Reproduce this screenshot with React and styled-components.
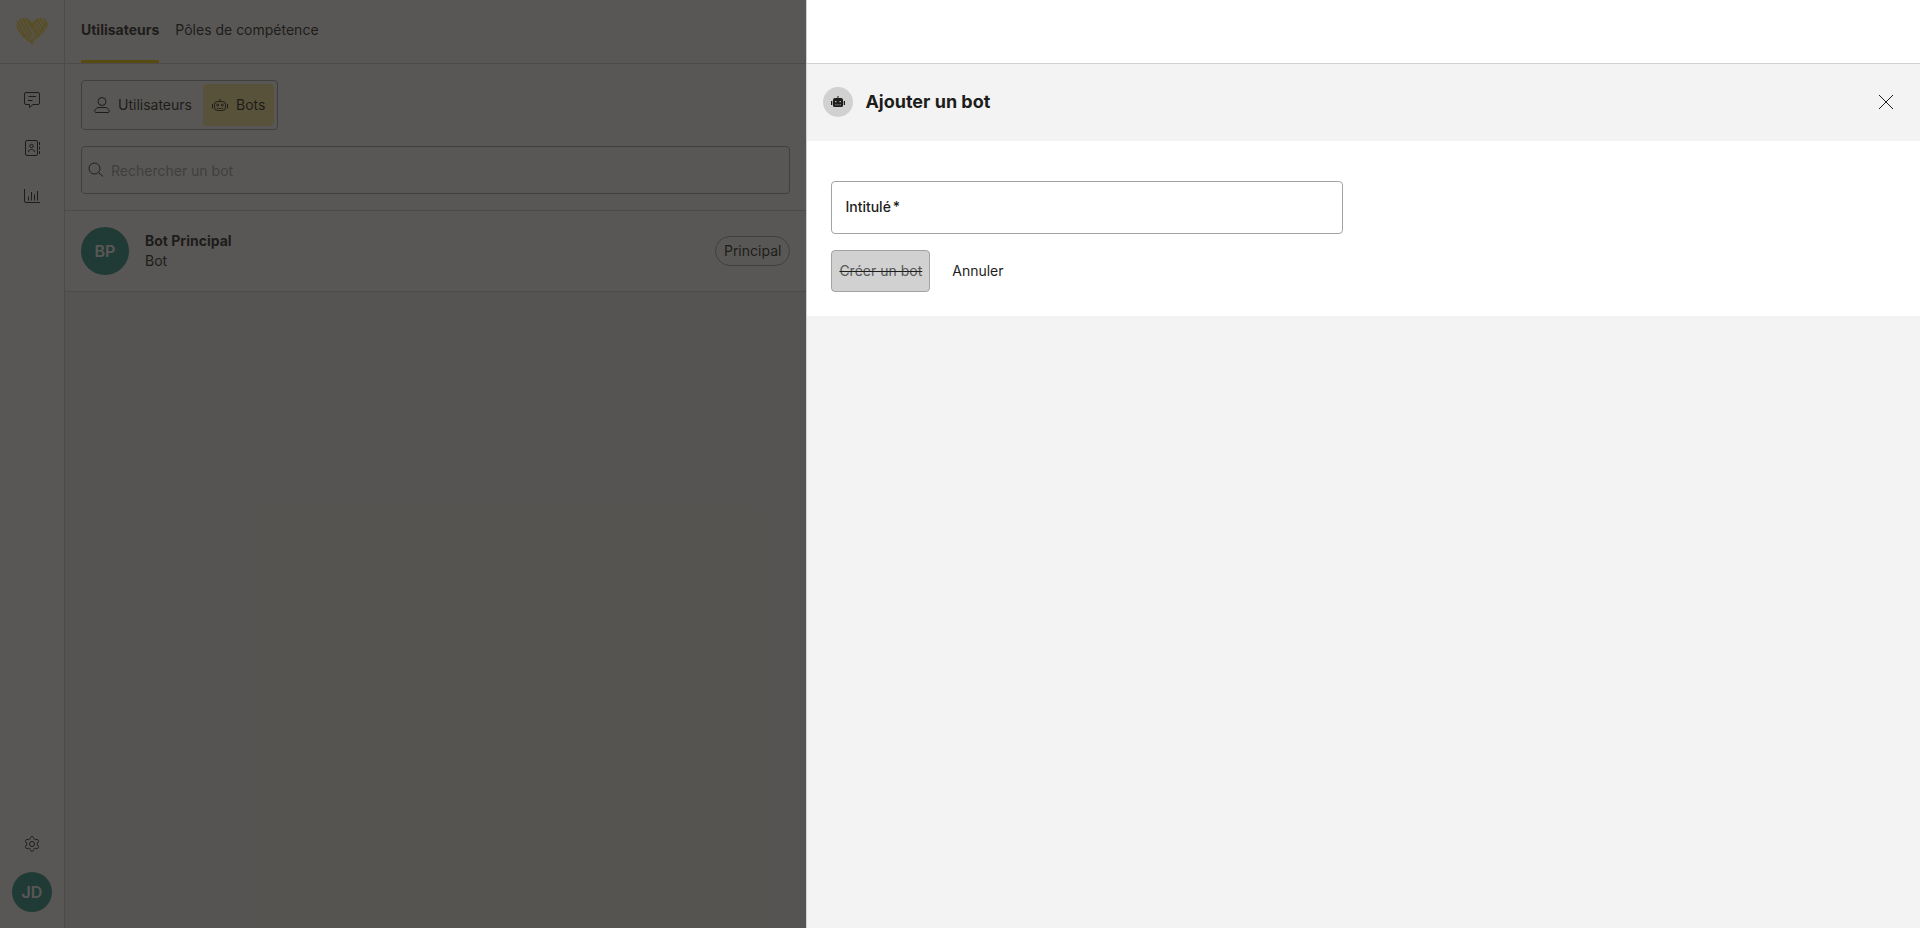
import React, { useState } from "react";
import styled, { createGlobalStyle } from "styled-components";

const GlobalStyle = createGlobalStyle`
  * {
    box-sizing: border-box;
  }
  body {
    margin: 0;
    font-family: Inter, "Liberation Sans", sans-serif;
    font-size: 14px;
    line-height: 20px;
    color: #1d1d1b;
    background: #f3f3f3;
  }
  button, input {
    font: inherit;
    color: inherit;
  }
  h1, h2, p {
    margin: 0;
  }
`;

const HeartLogo = () => (
  <svg width="32" height="28" viewBox="0 0 32 28" aria-hidden="true">
    <defs>
      <clipPath id="heart">
        <path d="M16 5C13 0 4-1 1 4c-3 6 2 11 6 16l9 8 10-10c4-4 8-9 5-14-3-5-12-4-15 1z" />
      </clipPath>
    </defs>
    <g clipPath="url(#heart)">
      <path d="M16 5C13 0 4-1 1 4c-3 6 2 11 6 16l9 8 10-10c4-4 8-9 5-14-3-5-12-4-15 1z" fill="#ffcd00" opacity="0.3" />
      <path
        d="M0 8l9 14M1 4l11 20M4 2l13 26M7 1l8 17M10 1l5 9M13 2l8 18M16 6l8 13M18 4l8 12M21 2l7 12M24 1l6 9M28 1l4 7M2 14l7 5M15 25l8-9M17 8l6-6M25 14l5-8"
        fill="none"
        stroke="#ffcd00"
      />
    </g>
  </svg>
);

const ChatIcon = () => (
  <svg width="16" height="16" viewBox="0 0 16 16" fill="none" stroke="currentColor" aria-hidden="true">
    <path d="M2 .5h12A1.500 1.500 0 0 1 15.500 2v9a1.500 1.500 0 0 1-1.500 1.500H9L5.500 15.500v-3H2A1.500 1.500 0 0 1 .5 11V2A1.500 1.500 0 0 1 2 .5z" />
    <path d="M4.500 4.500h7.500M4 8.500h4.500" />
  </svg>
);

const ContactsIcon = () => (
  <svg width="16" height="16" viewBox="0 0 16 16" fill="none" stroke="currentColor" aria-hidden="true">
    <rect x="1.500" y=".5" width="12" height="15" rx="1.500" />
    <circle cx="7.500" cy="6" r="1.700" />
    <path d="M4.500 12c0-2 1.500-2.500 3-2.500s3 .5 3 2.500M15.500 2v3M15.500 6.500v3M15.500 11v3" />
  </svg>
);

const ChartIcon = () => (
  <svg width="16" height="16" viewBox="0 0 16 16" fill="none" stroke="currentColor" aria-hidden="true">
    <path d="M.5 1v12a1.500 1.500 0 0 0 1.500 1.500h14M4.500 8.500v4M7.500 4v8.500M10.500 6.500v6M13.500 3v9.500" />
  </svg>
);

const GearIcon = () => (
  <svg width="16" height="16" viewBox="0 0 16 16" fill="none" stroke="currentColor" aria-hidden="true">
    <path
      strokeLinejoin="round"
      d="M6.600 1.400C7 .3 9 .3 9.400 1.400l.5 1.300c.2.600.9 1 1.500.9l1.500-.2c1.200-.2 2.100 1.500 1.400 2.400l-.9 1.200c-.4.500-.4 1.400 0 1.900l.9 1.200c.7.900-.2 2.600-1.400 2.400l-1.500-.2c-.6-.1-1.300.3-1.500.9l-.5 1.300c-.4 1.100-2.400 1.100-2.800 0l-.5-1.300c-.2-.6-.9-1-1.500-.9l-1.500.2c-1.200.2-2.100-1.500-1.400-2.400l.9-1.200c.4-.5.400-1.400 0-1.900l-.9-1.200c-.7-.9.200-2.600 1.400-2.400l1.500.2c.6.100 1.300-.3 1.500-.9z"
    />
    <circle cx="8" cy="8" r="2.500" />
  </svg>
);

const UserIcon = () => (
  <svg width="16" height="16" viewBox="0 0 16 16" fill="none" stroke="currentColor" aria-hidden="true">
    <circle cx="8" cy="4.500" r="4" />
    <path d="M2 15.500c-.9 0-1.400-.4-1.300-1.200.3-2.600 2.300-3.800 4.300-3.800h6c2 0 4 1.200 4.300 3.800.1.800-.4 1.200-1.300 1.200z" />
  </svg>
);

const RobotIcon = () => (
  <svg width="16" height="16" viewBox="0 0 16 16" fill="none" stroke="currentColor" aria-hidden="true">
    <rect x="2.500" y="4.500" width="11" height="9" rx="3" />
    <path d="M8 2v2.500M.5 7v4.500M15.500 7v4.500M5 11.500h1.500M7.300 11.500h1.500M9.600 11.500h1.500" />
    <circle cx="5.700" cy="8" r="1" />
    <circle cx="10.300" cy="8" r="1" />
  </svg>
);

const RobotSolidIcon = () => (
  <svg width="14" height="12" viewBox="0 0 14 12" fill="currentColor" aria-hidden="true">
    <path
      fillRule="evenodd"
      d="M6.500 0h1v2H10a2 2 0 0 1 2 2v5.500A1.500 1.500 0 0 1 10.500 11h-7A1.500 1.500 0 0 1 2 9.500V4a2 2 0 0 1 2-2h2.500zM4.200 5v1.200h1.200V5zm4.400 0v1.200h1.200V5zM4.200 8.500v.7h1.200v-.7zm2.200 0v.7h1.200v-.7zm2.200 0v.7h1.200v-.7zM0 5h1.300v4H0zM12.700 5H14v4h-1.300z"
    />
  </svg>
);

const SearchIcon = () => (
  <svg width="16" height="16" viewBox="0 0 16 16" fill="none" stroke="currentColor" aria-hidden="true">
    <circle cx="6.500" cy="6.500" r="5.500" />
    <path d="M10.500 10.500l4.500 4" />
  </svg>
);

const CloseIcon = () => (
  <svg width="14" height="14" viewBox="0 0 14 14" fill="none" stroke="currentColor" aria-hidden="true">
    <path d="M0 0l14 14M14 0L0 14" />
  </svg>
);

const modes = [
  { id: "users", label: "Utilisateurs", icon: <UserIcon /> },
  { id: "bots", label: "Bots", icon: <RobotIcon /> },
];

const App = () => {
  const [mode, setMode] = useState("bots");
  const [title, setTitle] = useState("");

  return (
    <>
      <GlobalStyle />
      <Page>
        <Background>
          <Sidebar>
            <LogoLink href="#" aria-label="Accueil">
              <HeartLogo />
            </LogoLink>
            <Nav>
              <NavLink href="#" aria-label="Messages"><ChatIcon /></NavLink>
              <NavLink href="#" aria-label="Contacts"><ContactsIcon /></NavLink>
              <NavLink href="#" aria-label="Statistiques"><ChartIcon /></NavLink>
            </Nav>
            <SidebarBottom>
              <NavLink href="#" aria-label="Paramètres"><GearIcon /></NavLink>
              <Avatar $size={40}>JD</Avatar>
            </SidebarBottom>
          </Sidebar>

          <Main>
            <Tabs>
              <Tab href="#" $active>Utilisateurs</Tab>
              <Tab href="#">Pôles de compétence</Tab>
            </Tabs>
            <Filters>
              <Segmented>
                {modes.map(({ id, label, icon }) => (
                  <Segment key={id} $active={mode === id} onClick={() => setMode(id)}>
                    {icon}
                    {label}
                  </Segment>
                ))}
              </Segmented>
              <SearchBox>
                <SearchIcon />
                <SearchInput type="search" aria-label="Rechercher un bot" placeholder="Rechercher un bot" />
              </SearchBox>
            </Filters>
            <BotRow>
              <Avatar $size={48}>BP</Avatar>
              <BotInfo>
                <BotName>Bot Principal</BotName>
                <p>Bot</p>
              </BotInfo>
              <Badge>Principal</Badge>
            </BotRow>
          </Main>
          <Overlay />
        </Background>

        <Panel>
          <PanelTop />
          <PanelHeader>
            <RoundIcon><RobotSolidIcon /></RoundIcon>
            <PanelTitle>Ajouter un bot</PanelTitle>
            <CloseButton aria-label="Fermer"><CloseIcon /></CloseButton>
          </PanelHeader>
          <Form onSubmit={(e) => e.preventDefault()}>
            <Field>
              <FieldLabel htmlFor="title">Intitulé<Star>*</Star></FieldLabel>
              <FieldInput id="title" value={title} onChange={(e) => setTitle(e.target.value)} />
            </Field>
            <Actions>
              <SubmitButton type="submit" disabled={!title}>Créer un bot</SubmitButton>
              <CancelButton type="button">Annuler</CancelButton>
            </Actions>
          </Form>
        </Panel>
      </Page>
    </>
  );
};

const Page = styled.div`
  display: grid;
  grid-template-columns: 42fr 58fr;
  min-height: 100vh;
`;

const Background = styled.div`
  position: relative;
  display: flex;
  min-width: 0;
`;

const Overlay = styled.div`
  position: absolute;
  inset: 0;
  background: rgba(30, 28, 25, 0.74);
`;

const Sidebar = styled.aside`
  display: flex;
  flex-direction: column;
  width: 65px;
  flex-shrink: 0;
  background: white;
  border-right: 1px solid #d1d1d1;
`;

const LogoLink = styled.a`
  display: flex;
  align-items: center;
  justify-content: center;
  height: 64px;
  padding-bottom: 2px;
  border-bottom: 1px solid #d1d1d1;
`;

const Nav = styled.nav`
  display: flex;
  flex-direction: column;
  padding-top: 12px;
`;

const NavLink = styled.a`
  display: flex;
  align-items: center;
  justify-content: center;
  height: 48px;
  color: inherit;
`;

const SidebarBottom = styled.div`
  display: flex;
  flex-direction: column;
  align-items: center;
  gap: 4px;
  margin-top: auto;
  padding-bottom: 16px;
`;

const Avatar = styled.div`
  display: flex;
  align-items: center;
  justify-content: center;
  flex-shrink: 0;
  width: ${({ $size }) => $size}px;
  height: ${({ $size }) => $size}px;
  border-radius: 50%;
  background: #288f88;
  color: white;
  font-size: 16px;
  font-weight: 600;
`;

const Main = styled.main`
  flex: 1;
  min-width: 0;
  background: #f3f3f3;
`;

const Tabs = styled.nav`
  display: flex;
  gap: 16px;
  height: 64px;
  padding: 0 16px;
  background: white;
  border-bottom: 1px solid #d1d1d1;
`;

const Tab = styled.a`
  display: flex;
  align-items: center;
  border-bottom: 3px solid ${({ $active }) => ($active ? "#ffcd00" : "transparent")};
  color: inherit;
  font-weight: ${({ $active }) => ($active ? 700 : 400)};
  text-decoration: none;
`;

const Filters = styled.div`
  display: flex;
  flex-direction: column;
  align-items: flex-start;
  gap: 16px;
  padding: 16px;
  background: white;
  border-bottom: 1px solid #d1d1d1;
`;

const Segmented = styled.div`
  display: flex;
  gap: 2px;
  padding: 3px;
  border: 1px solid #a3a3a3;
  border-radius: 4px;
`;

const Segment = styled.button`
  display: flex;
  align-items: center;
  gap: 8px;
  height: 42px;
  padding: 0 9px;
  border: none;
  border-radius: 4px;
  background: ${({ $active }) => ($active ? "#ffeb99" : "transparent")};
  cursor: pointer;
`;

const SearchBox = styled.div`
  display: flex;
  align-items: center;
  gap: 7px;
  width: 100%;
  height: 48px;
  padding: 0 6px;
  border: 1px solid #a3a3a3;
  border-radius: 4px;
`;

const SearchInput = styled.input`
  flex: 1;
  padding: 2px 0 0;
  border: none;
  outline: none;
  background: transparent;
  &::placeholder {
    color: #a3a3a3;
  }
`;

const BotRow = styled.div`
  display: flex;
  align-items: center;
  gap: 16px;
  padding: 16px;
  background: white;
  border-bottom: 1px solid #d1d1d1;
`;

const BotInfo = styled.div`
  flex: 1;
`;

const BotName = styled.p`
  font-weight: 700;
`;

const Badge = styled.span`
  padding: 4px 8px;
  border: 1px solid #a3a3a3;
  border-radius: 16px;
`;

const Panel = styled.section`
  min-width: 0;
  background: #f3f3f3;
  border-left: 1px solid #d1d1d1;
`;

const PanelTop = styled.div`
  height: 64px;
  background: white;
  border-bottom: 1px solid #d1d1d1;
`;

const PanelHeader = styled.header`
  display: flex;
  align-items: center;
  gap: 12px;
  height: 77px;
  padding: 0 16px 1px;
`;

const RoundIcon = styled.span`
  display: flex;
  align-items: center;
  justify-content: center;
  width: 30px;
  height: 30px;
  border-radius: 50%;
  background: #d1d1d1;
`;

const PanelTitle = styled.h2`
  flex: 1;
  font-size: 18px;
  font-weight: 700;
  line-height: 24px;
`;

const CloseButton = styled.button`
  display: flex;
  align-items: center;
  justify-content: center;
  width: 36px;
  height: 36px;
  padding: 0;
  border: none;
  background: none;
  cursor: pointer;
`;

const Form = styled.form`
  display: flex;
  flex-direction: column;
  gap: 16px;
  padding: 40px 24px 24px;
  background: white;
`;

const Field = styled.div`
  display: flex;
  align-items: center;
  width: 100%;
  max-width: 512px;
  height: 53px;
  padding: 0 13px 1px;
  border: 1px solid #a3a3a3;
  border-radius: 4px;
`;

const FieldLabel = styled.label`
  font-weight: 500;
`;

const Star = styled.span`
  margin-left: 2px;
`;

const FieldInput = styled.input`
  flex: 1;
  min-width: 0;
  border: none;
  outline: none;
  background: transparent;
`;

const Actions = styled.div`
  display: flex;
  gap: 12px;
`;

const SubmitButton = styled.button`
  height: 42px;
  padding: 0 7px;
  border: 1px solid #a3a3a3;
  border-radius: 4px;
  background: #ffcd00;
  &:disabled {
    background: #d1d1d1;
    color: #575756;
    text-decoration: line-through #1d1d1b;
  }
`;

const CancelButton = styled.button`
  height: 42px;
  padding: 0 10px;
  border: none;
  background: none;
`;

export default App;
